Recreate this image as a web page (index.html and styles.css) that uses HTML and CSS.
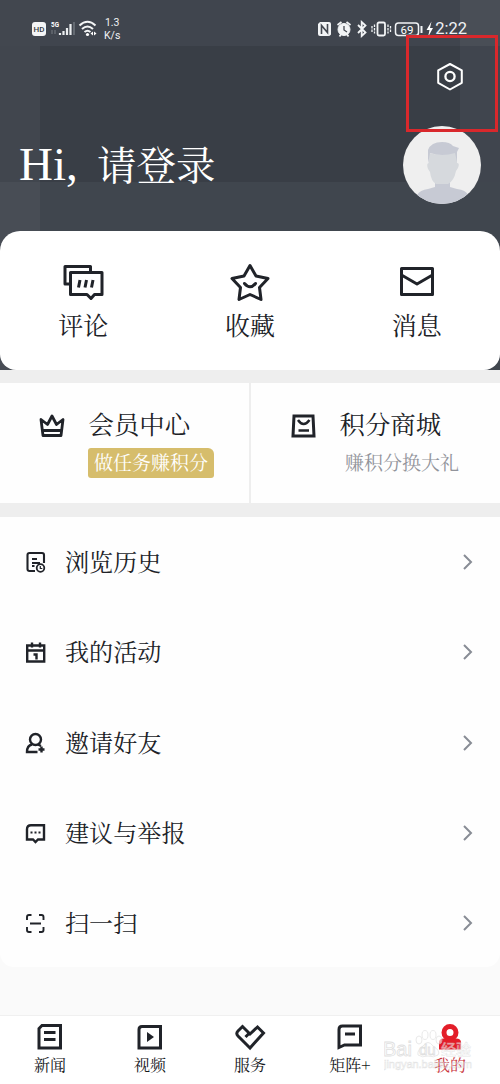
FILE: index.html
```html
<!DOCTYPE html>
<html lang="zh-CN">
<head>
<meta charset="utf-8">
<title>我的</title>
<link rel="stylesheet" href="styles.css">
</head>
<body>
<main class="screen">
  <header class="hero">
    <div class="status">
      <div class="status-left">
        <svg width="66" height="20" viewBox="0 0 66 20" fill="none">
          <rect x="0" y="3" width="14" height="14" rx="3" fill="#f4f5f6"/>
          <text x="7" y="13" text-anchor="middle" class="hd">HD</text>
          <text x="19" y="8" class="five-g" textLength="8" lengthAdjust="spacingAndGlyphs">5G</text>
          <path d="M20 11v4M23 11v4" stroke="#646a72" stroke-width="1.5"/>
          <path d="M28 16v-2M31.500 16v-4M35 16V9M38.500 16V5" stroke="#eceef0" stroke-width="2.200"/>
          <path d="M42 16V3" stroke="#646a72" stroke-width="2"/>
          <path d="M47.500 6.500Q55.500-1 63.500 6.500M50 10Q55.500 5 61 10M52.500 13Q55.500 10.500 58.500 13" stroke="#f4f5f6" stroke-width="2"/>
          <circle cx="55.500" cy="15.500" r="1.600" fill="#fff"/>
          <path d="M61 12.500l-2.500 2 2.500 2zM62 12.500l2.500 2-2.500 2z" fill="#fff"/>
        </svg>
        <span class="speed">1.3<br>K/s</span>
      </div>
      <div class="status-right">
        <svg width="118" height="18" viewBox="0 0 118 18" fill="none" stroke="#f2f4f6">
          <path d="M3 2h9q2 0 2 2v10.500q-1 1.500-3 1.500H3q-2 0-2-2V4z" fill="#f2f4f6" stroke="none"/>
          <path d="M4.500 14V5.500l6 7V4" stroke="#444951" stroke-width="1.600"/>
          <circle cx="27" cy="9.500" r="6" fill="#f2f4f6"/>
          <path d="M20.500 5l4-3M33.500 5l-4-3M22.500 16.500l2-3M31.500 16.500l-2-3" stroke-width="1.800"/>
          <path d="M27 6v4l3 2" stroke="#444951" stroke-width="1.300"/>
          <path d="M41 5l7.500 7.500-3.800 3.500V2L48.500 5.500 41 13" stroke-width="1.800"/>
          <rect x="60.500" y="2.500" width="7.500" height="13" rx="1.500" stroke-width="1.800"/>
          <path d="M57.500 4.500v9M71 4.500v9M55 6v6M73.500 6v6" stroke-width="1.300" stroke-dasharray="2.500 1"/>
          <rect x="78.500" y="3" width="23" height="12.500" rx="3" stroke-width="1.500"/>
          <path d="M104.500 6v7" stroke-width="2"/>
          <text x="90" y="13.500" text-anchor="middle" class="battery">69</text>
          <path d="M114.500 1.500L109.500 10h3l-1.500 7 5-9h-3z" fill="#fff" stroke="none"/>
        </svg>
        <span class="clock">2:22</span>
      </div>
    </div>
    <div class="settings">
      <svg width="28" height="30" viewBox="0 0 28 30" fill="none" stroke="#fff" stroke-width="2" stroke-linejoin="round">
        <path d="M14 2l11.800 6.400v12.400L14 27.500 2.200 20.800V8.400z"/>
        <circle cx="14" cy="14.500" r="4.600" stroke-width="2.300"/>
      </svg>
    </div>
    <div class="greeting">
      <div class="hello"><span class="hi">Hi,</span><span>请登录</span></div>
      <svg class="avatar" width="78" height="78" viewBox="0 0 78 78">
        <defs><clipPath id="face"><circle cx="39" cy="39" r="39"/></clipPath></defs>
        <g clip-path="url(#face)">
          <rect width="78" height="78" fill="#efefef"/>
          <path d="M14 78V69q3-5 11-6l7-2V48h15v13l7 2q9 1 11 6v9z" fill="#c7cad4"/>
          <path d="M26 27q14 4 28-2v12q3 0 1 5l-2 3q-2 10-8 13H33q-5-3-6-12l-2-3q-2-6 1-6z" fill="#d6d9dd"/>
          <path d="M25 38V24q3-8 14-8 8 0 11 4l6 2-2 4v10l-2-9q-13 4-25 0z" fill="#c7cad4"/>
        </g>
      </svg>
    </div>
    <section class="quick">
      <div class="quick-item">
        <svg width="42" height="38" viewBox="0 0 42 38" fill="none" stroke="#202329" stroke-width="3" stroke-linejoin="round">
          <path d="M8 21H3V3.500H28.500V9"/>
          <path d="M8.500 9.500h31.500v22h-7.500L29 35.500l-4-4H8.500z"/>
          <path d="M18 17l-1.500 7.500M24.500 17L23 24.500M31 17l-1.500 7.500"/>
        </svg>
        <span>评论</span>
      </div>
      <div class="quick-item">
        <svg width="42" height="38" viewBox="0 0 42 38" fill="none" stroke="#202329" stroke-width="3" stroke-linejoin="round" stroke-linecap="round">
          <path d="M21 2.500l6 10.500 12 2.500-8.500 9 1.500 12L21 31.500l-11 5 1.500-12-8.500-9L15 13z"/>
          <path d="M15.500 20.500q5.500 6.500 11 0"/>
        </svg>
        <span>收藏</span>
      </div>
      <div class="quick-item">
        <svg width="42" height="38" viewBox="0 0 42 38" fill="none" stroke="#202329" stroke-width="3" stroke-linejoin="round">
          <path d="M5.500 5.500h31v26h-31zM5.500 12L21 21l15.500-9"/>
        </svg>
        <span>消息</span>
      </div>
    </section>
  </header>

  <section class="promos">
    <div class="promo">
      <svg width="28" height="28" viewBox="0 0 28 28" fill="none" stroke="#202329" stroke-width="2.800" stroke-linejoin="round">
        <path d="M5 24.500L3 8.500l6.500 5L14 5l4.500 8.500 6.500-5-2 16zM5 19.500h18.500"/>
      </svg>
      <div class="promo-text"><span class="promo-title">会员中心</span><span class="tag">做任务赚积分</span></div>
    </div>
    <div class="promo">
      <svg width="28" height="28" viewBox="0 0 28 28" fill="none" stroke="#202329" stroke-width="3">
        <path d="M5 5h19l1 20H4z"/>
        <path d="M9 9q5.500 8 11.500 0M9.500 19.500H20" stroke-width="2.500"/>
      </svg>
      <div class="promo-text"><span class="promo-title">积分商城</span><span class="hint">赚积分换大礼</span></div>
    </div>
  </section>

  <section class="menu">
    <div class="row">
      <svg width="22" height="22" viewBox="0 0 22 22" fill="none" stroke="#202329" stroke-width="2.100">
        <path d="M10 20H4.500q-2 0-2-2V4q0-2 2-2H17q2 0 2 2v8M7 8h5M7 12h8M7 15h2.500"/>
        <circle cx="15.500" cy="17" r="3.800" stroke-width="1.800"/><path d="M15.300 15v2.500h2" stroke-width="1.200"/>
      </svg>
      <span>浏览历史</span>
      <svg class="chevron" width="10" height="16" viewBox="0 0 10 16"><path d="M1 1l7 7-7 7"/></svg>
    </div>
    <div class="row">
      <svg width="22" height="22" viewBox="0 0 22 22" fill="none" stroke="#202329" stroke-width="2.400">
        <path d="M2.200 4.500h17v16h-17zM2 9.500h17M7 1.500v5M15 1.500v5M8.500 13.500h3v5"/>
      </svg>
      <span>我的活动</span>
      <svg class="chevron" width="10" height="16" viewBox="0 0 10 16"><path d="M1 1l7 7-7 7"/></svg>
    </div>
    <div class="row">
      <svg width="22" height="22" viewBox="0 0 22 22" fill="none" stroke="#202329" stroke-width="2.400">
        <circle cx="10.500" cy="7.500" r="5.500"/>
        <path d="M7 12.500q-5 1-5 7.500h10.500M13 12.500l3 1.500M16.500 14.500v6M13.500 17.500h6"/>
      </svg>
      <span>邀请好友</span>
      <svg class="chevron" width="10" height="16" viewBox="0 0 10 16"><path d="M1 1l7 7-7 7"/></svg>
    </div>
    <div class="row">
      <svg width="22" height="22" viewBox="0 0 22 22" fill="none" stroke="#202329" stroke-width="2.400">
        <path d="M6 3.200h13v14.300h-6L10.500 20 8 17.500H2V7.200q0-4 4-4z"/>
        <path d="M5.500 10.500h2M9.500 10.500h2M13.500 10.500h2" stroke-width="2"/>
      </svg>
      <span>建议与举报</span>
      <svg class="chevron" width="10" height="16" viewBox="0 0 10 16"><path d="M1 1l7 7-7 7"/></svg>
    </div>
    <div class="row">
      <svg width="22" height="22" viewBox="0 0 22 22" fill="none" stroke="#202329" stroke-width="1.900">
        <path d="M2 8V5q0-2 2-2h2.500M14 3h2.500q2 0 2 2v3M2 15v3q0 2 2 2h2.500M14 20h2.500q2 0 2-2v-3M5 11.500h11"/>
      </svg>
      <span>扫一扫</span>
      <svg class="chevron" width="10" height="16" viewBox="0 0 10 16"><path d="M1 1l7 7-7 7"/></svg>
    </div>
  </section>

  <nav class="tabs">
    <div class="tab">
      <svg width="30" height="30" viewBox="0 0 30 30" fill="none" stroke="#202329" stroke-width="3">
        <path d="M7 4.500h18.500v22.500H4V7.500zM9 11.500H20.500M9 18.500H20.500"/>
      </svg><span>新闻</span>
    </div>
    <div class="tab">
      <svg width="30" height="30" viewBox="0 0 30 30" fill="none" stroke="#202329" stroke-width="3">
        <path d="M7 5.500h18.500V27H4V8.500q0-3 3-3z"/><path d="M12 11l7 5-7 5z" fill="#202329" stroke="none"/>
      </svg><span>视频</span>
    </div>
    <div class="tab">
      <svg width="32" height="30" viewBox="0 0 32 30" fill="none" stroke="#202329" stroke-width="3">
        <path d="M16 27L4 15Q1.500 12.500 4 10L8.500 5.500l7.500 7.500 7.500-7L29.500 12zM15.500 12l-4 4"/>
      </svg><span>服务</span>
    </div>
    <div class="tab">
      <svg width="30" height="30" viewBox="0 0 30 30" fill="none" stroke="#202329" stroke-width="3">
        <path d="M7.500 5h18v19H9.500L4 26.500v-18Q4 5 7.500 5zM10 13h10"/>
      </svg><span>矩阵+</span>
    </div>
    <div class="tab active">
      <svg width="30" height="30" viewBox="0 0 30 30">
        <circle cx="15" cy="11.500" r="6" fill="none" stroke="#e31e29" stroke-width="5"/>
        <path d="M4 28.500v-7q0-4 5-4h12q5 0 5 4v7z" fill="#e31e29"/>
      </svg><span>我的</span>
    </div>
  </nav>

  <div class="highlight"></div>
  <svg class="watermark" width="94" height="44" viewBox="0 0 94 44">
    <g class="paw"><ellipse cx="35" cy="12" rx="3" ry="4"/><ellipse cx="41" cy="7" rx="3" ry="4.500"/><ellipse cx="49" cy="7" rx="3" ry="4.500"/><ellipse cx="55" cy="12" rx="3" ry="4"/><path d="M34 27q-1-5 5-9 5-7 10 0 8 5 5 9-4 3-10 1-6 2-10-1z"/></g>
    <text x="-1" y="28" class="mark">Bai</text>
    <text x="35" y="27" class="mark mark-du">du</text>
    <text x="57" y="27" class="mark-cn">经验</text>
    <text x="0" y="40" class="mark-url" textLength="88">jingyan.baidu.com</text>
  </svg>
</main>
</body>
</html>
```
FILE: styles.css
```css
* { box-sizing: border-box; }
body { margin: 0; }
.screen {
  position: relative;
  width: 500px;
  height: 1084px;
  overflow: hidden;
  display: flex;
  flex-direction: column;
  background: #eee;
  color: #202227;
  font-family: "Noto Serif CJK SC", "Noto Serif SC", "Source Han Serif SC", "Noto Sans CJK SC", serif;
  font-weight: 400;
}
svg { display: block; flex: none; }
.hero {
  height: 370px;
  flex: none;
  display: flex;
  flex-direction: column;
  background:
    linear-gradient(#393e46, #393e46) 40px 46px / 420px 136px no-repeat,
    linear-gradient(90deg, #42474f 40px, #40454e 40px, #40454e 460px, #494e56 460px) 0 0 / 100% 46px no-repeat,
    linear-gradient(90deg, #41464e 40px, #40454e 40px) 0 46px / 100% 136px no-repeat,
    linear-gradient(90deg, #484d55 40px, #40464e 40px);
}
.status {
  height: 58px;
  padding: 0 33px 0 32px;
  display: flex;
  align-items: center;
  justify-content: space-between;
  color: #f0f2f5;
  font-family: Roboto, sans-serif;
}
.status-left, .status-right { display: flex; align-items: center; }
.status-left { gap: 6px; }
.speed { font-size: 10.5px; line-height: 13px; text-align: center; }
.clock { font-size: 16.5px; line-height: 20px; }
.hd { font: 500 8px Roboto, sans-serif; fill: #33383f; }
.five-g { font: 700 7px Roboto, sans-serif; fill: #fff; }
.battery { font: 400 11.5px Roboto, sans-serif; fill: #fff; stroke: none; }
.settings { height: 68px; padding: 4px 36px 0 0; display: flex; justify-content: flex-end; }
.greeting {
  height: 105px;
  padding: 0 19px 0 19px;
  display: flex;
  justify-content: space-between;
  align-items: flex-start;
}
.hello { display: flex; align-items: baseline; gap: 20px; color: #fff; font-size: 39.5px; line-height: 74px; }
.hi { font-family: "Liberation Serif", serif; font-size: 47px; width: 58px; }
.quick { flex: 1; display: flex; padding-top: 32px; background: #fff; border-radius: 20px 20px 16px 16px; }
.quick-item { flex: 1; display: flex; flex-direction: column; align-items: center; gap: 5px; font-size: 25px; line-height: 36px; }
.promos { flex: none; display: grid; grid-template-columns: 249px 249px; gap: 2px; margin-top: 13px; height: 120px; }
.promo { display: flex; gap: 22px; padding: 23px 0 0 38px; background: #fefefe; }
.promo-text { display: flex; flex-direction: column; align-items: flex-start; white-space: nowrap; }
.promo > svg { margin-top: 5px; }
.promo-title { margin-left: .5px; font-size: 25.4px; line-height: 34px; }
.tag { margin-top: 8px; width: 126px; height: 30px; line-height: 28px; border-radius: 3px 6px 3px 3px; background: #d6bd6c; color: #fff; font-size: 19px; text-align: center; }
.hint { margin: 8px 0 0 6px; line-height: 28px; font-size: 19px; color: #92949b; }
.menu { flex: none; margin-top: 14px; height: 450px; background: #fefefe; border-radius: 0 0 14px 14px; box-shadow: 0 20px 0 30px #fafafa; clip-path: inset(0 0 -48px); }
.row { height: 90.3px; padding: 0 27px 0 25px; display: flex; align-items: center; font-size: 24.1px; line-height: 36px; }
.row:last-child { height: 88.8px; }
.row span { margin: -2px 0 0 18px; }
.chevron { margin-left: auto; fill: none; stroke: #888c95; stroke-width: 2; }
.tabs { position: relative; flex: none; margin-top: 48px; height: 69px; display: flex; background: #fff; border-top: 1px solid #f0f0f0; }
.tab { flex: 1; display: flex; flex-direction: column; align-items: center; padding-top: 5px; font-size: 16px; line-height: 24px; gap: 2px; color: #15171a; }
.active { color: #c9343d; }
.highlight { position: absolute; left: 406px; top: 35px; width: 92px; height: 97px; border: 3px solid #d9282c; }
.watermark { position: absolute; left: 384px; top: 1028px; opacity: .6; }
.paw { fill: #fff; stroke: #ddd; stroke-width: 1; }
.mark { font: 400 20px "Liberation Sans", sans-serif; fill: #fff; stroke: #ccc; stroke-width: .8; }
.mark-du { font-size: 15px; }
.mark-cn { font: 500 15px "Noto Sans CJK SC", sans-serif; fill: #fff; stroke: #d4d4d4; stroke-width: .5; }
.mark-url { font: 400 11px "Liberation Sans", sans-serif; fill: #fff; stroke: #d0d0d0; stroke-width: .5; }
```
